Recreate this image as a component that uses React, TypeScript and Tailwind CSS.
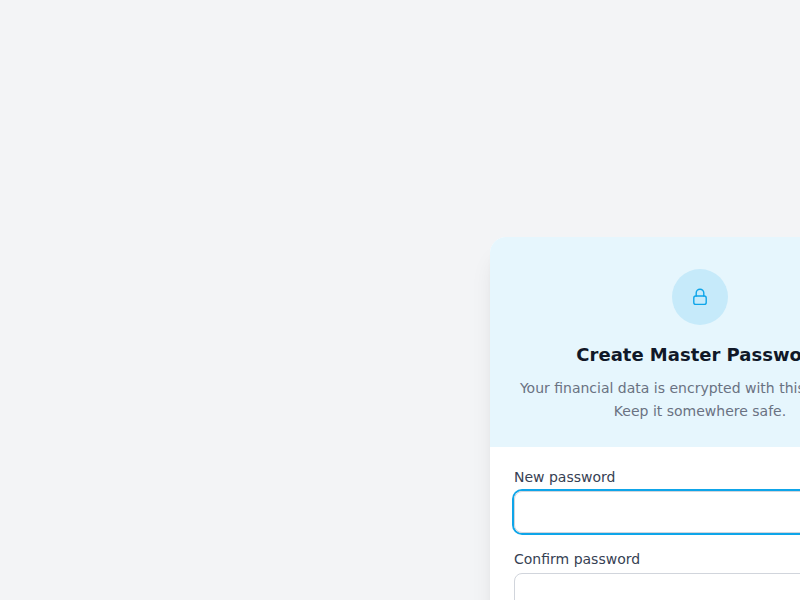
const fontStack = { fontFamily: '"DejaVu Sans", sans-serif' }

function LockIcon() {
  return (
    <svg
      viewBox="0 0 20 20"
      fill="none"
      stroke="currentColor"
      strokeWidth={1.4}
      strokeLinecap="round"
      strokeLinejoin="round"
      className="h-5 w-5 text-[#0ea5e9]"
    >
      <rect x="3.8" y="9" width="12.4" height="8.4" rx="2" />
      <path d="M6.2 9V6a3.8 3.8 0 0 1 7.6 0v3" />
    </svg>
  )
}

export default function App() {
  return (
    <div
      className="flex h-screen items-start overflow-hidden bg-gray-100 pl-[490px] pt-[237px]"
      style={fontStack}
    >
      <div className="w-[420px] shrink-0 overflow-hidden rounded-2xl bg-white shadow-xl">
        <div className="flex flex-col items-center bg-[#e6f6fd] px-6 pb-6 pt-8 text-center">
          <div className="flex h-14 w-14 items-center justify-center rounded-full bg-[#c6eafa]">
            <LockIcon />
          </div>
          <h1 className="mt-4 text-lg font-semibold leading-7 text-gray-900">Create Master Password</h1>
          <p className="mt-2 text-sm leading-[23px] text-gray-500">
            Your financial data is encrypted with this password. Keep it somewhere safe.
          </p>
        </div>

        <form className="flex flex-col gap-4 px-6 pb-6 pt-5">
          <div>
            <label htmlFor="new-password" className="mb-1 block text-sm leading-5 text-gray-700">
              New password
            </label>
            {/* drawn in its focused state, autoFocus would scroll the clipped page */}
            <input
              id="new-password"
              type="password"
              className="block h-[42px] w-full rounded-lg border border-gray-300 px-3 text-sm outline-none ring-2 ring-[#0ea5e9]"
            />
          </div>
          <div>
            <label htmlFor="confirm-password" className="mb-1 block text-sm leading-5 text-gray-700">
              Confirm password
            </label>
            <input
              id="confirm-password"
              type="password"
              className="block h-[42px] w-full rounded-lg border border-gray-300 px-3 text-sm outline-none"
            />
          </div>
        </form>
      </div>
    </div>
  )
}
